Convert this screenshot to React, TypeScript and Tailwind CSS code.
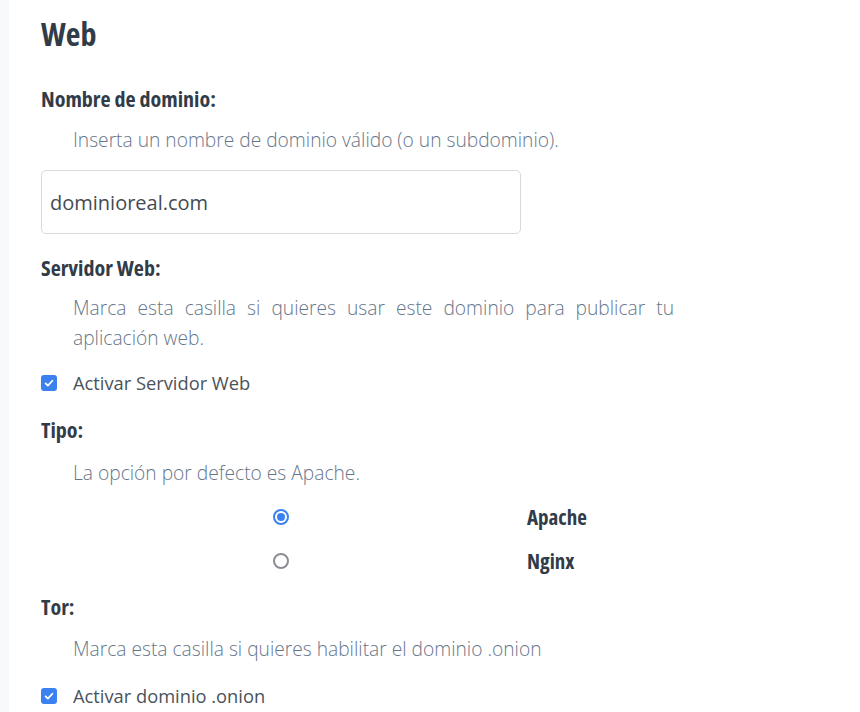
import React from 'react';

const font = { fontFamily: '"Open Sans", "Noto Sans", sans-serif' };

const Label: React.FC<{ children: React.ReactNode }> = ({ children }) => (
  <h3 className="text-[22px] leading-[28px] font-bold text-[#313c48] font-stretch-condensed">{children}</h3>
);

const Help: React.FC<{ children: React.ReactNode }> = ({ children }) => (
  <p className="pl-8 w-[633px] text-[19.2px] leading-[30px] font-light text-[#66768a] text-justify font-stretch-[88%]">
    {children}
  </p>
);

const Check: React.FC<{ label: string }> = ({ label }) => (
  <label className="flex items-center gap-4 text-[18.3px] leading-[28px] text-[#4a525b] font-stretch-[92%]">
    <span className="w-4 h-4 rounded-[3px] bg-[#3b82f0] flex items-center justify-center">
      <svg viewBox="0 0 16 16" className="w-3 h-3" fill="none" stroke="white" strokeWidth="2.4" strokeLinecap="round" strokeLinejoin="round">
        <path d="M3.5 8.5l3 3 6-6.5" />
      </svg>
    </span>
    {label}
  </label>
);

const Radio: React.FC<{ checked?: boolean }> = ({ checked }) =>
  checked ? (
    <span className="w-4 h-4 rounded-full border-2 border-[#3b82f0] flex items-center justify-center">
      <span className="w-2 h-2 rounded-full bg-[#3b82f0]" />
    </span>
  ) : (
    <span className="w-4 h-4 rounded-full border-2 border-[#8c8c96]" />
  );

export default function App() {
  return (
    <div className="w-[860px] h-[712px] overflow-hidden flex bg-white" style={font}>
      <div className="w-[9px] bg-[#f8f9fa] shrink-0" />
      <div className="pl-8 pt-[14px]">
        <h2 className="text-[32px] leading-[40px] font-bold text-[#313c48] font-stretch-condensed">Web</h2>

        <div className="mt-[30px]">
          <Label>Nombre de dominio:</Label>
          <div className="mt-[13px]">
            <Help>Inserta un nombre de dominio válido (o un subdominio).</Help>
          </div>
          <input
            className="mt-[15px] w-[480px] h-[64px] rounded-[5px] border border-[#dadada] px-2 text-[20px] text-[#444b52] font-stretch-[92%] outline-none"
            defaultValue="dominioreal.com"
          />
        </div>

        <div className="mt-[19px]">
          <Label>Servidor Web:</Label>
          <div className="mt-[12px]">
            <Help>Marca esta casilla si quieres usar este dominio para publicar tu aplicación web.</Help>
          </div>
          <div className="mt-[16px]">
            <Check label="Activar Servidor Web" />
          </div>
        </div>

        <div className="mt-[18px]">
          <Label>Tipo:</Label>
          <div className="mt-[15px]">
            <Help>La opción por defecto es Apache.</Help>
          </div>
          <div className="mt-[15px] grid grid-cols-[480px_1fr] gap-x-[6px] gap-y-[16px] text-[21px] leading-[28px] font-bold text-[#313c48] font-stretch-condensed">
            <div className="flex items-center justify-center"><Radio checked /></div>
            <div>Apache</div>
            <div className="flex items-center justify-center"><Radio /></div>
            <div>Nginx</div>
          </div>
        </div>

        <div className="mt-[17px]">
          <Label>Tor:</Label>
          <div className="mt-[14px]">
            <Help>Marca esta casilla si quieres habilitar el dominio .onion</Help>
          </div>
          <div className="mt-[18px]">
            <Check label="Activar dominio .onion" />
          </div>
        </div>
      </div>
    </div>
  );
}
